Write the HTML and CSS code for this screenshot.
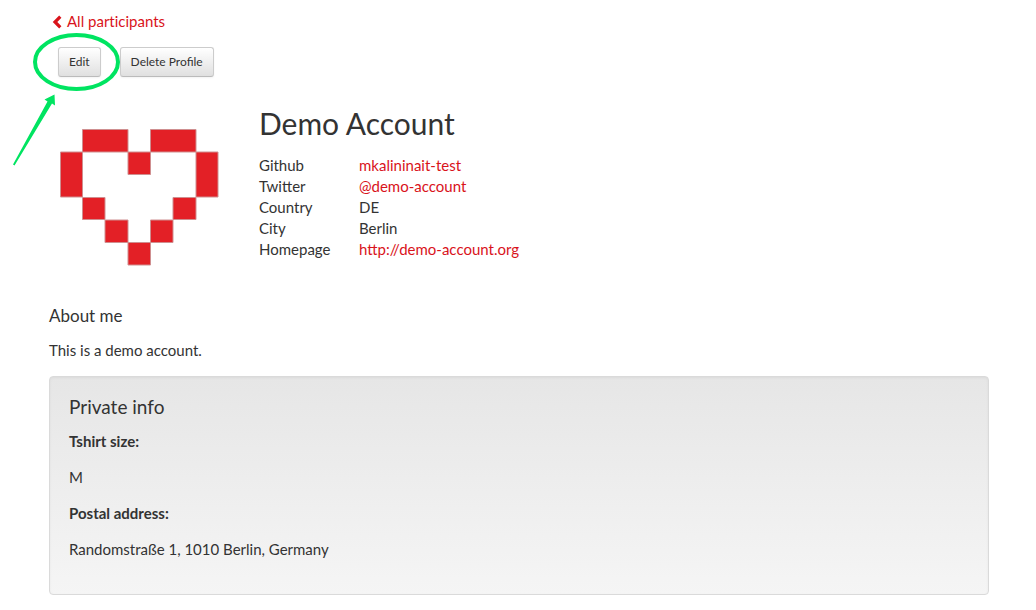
FILE: index.html
```html
<!DOCTYPE html>
<html lang="en">
<head>
<meta charset="utf-8">
<meta name="viewport" content="width=device-width, initial-scale=1">
<title>Demo Account</title>
<link rel="stylesheet" href="styles.css">
</head>
<body>
<main class="container">
  <nav class="actions">
    <a class="back" href="#"><svg class="chevron" viewBox="0 0 10 14" aria-hidden="true"><path d="M8.300 1.700 3 7l5.300 5.300" fill="none" stroke="currentColor" stroke-width="3.200"/></svg>All participants</a>
    <div class="buttons">
      <button class="btn" type="button">Edit</button>
      <button class="btn" type="button">Delete Profile</button>
    </div>
  </nav>

  <section class="profile">
    <svg class="avatar" viewBox="0 0 159 137" role="img" aria-label="Pixel heart">
      <g fill="#e32026" stroke="#cf8f90" stroke-width="1">
        <path d="M22.500 .5h45.500v22.500h-45.500zM90.500 .5h45.500v22.500h-45.500zM.5 23h22v45h-22zM136 23h22v45h-22zM68 23h22.500v22.500h-22.500zM22.500 68.500h22.500v22h-22.500zM113 68.500h23v22h-23zM45 91h23v22.500h-23zM90.500 91h22.500v22.500h-22.500zM68 113.500h22.500v22.500h-22.500z"/>
      </g>
    </svg>
    <div>
      <h1 class="name">Demo Account</h1>
      <dl class="details">
        <dt>Github</dt><dd><a href="#">mkalininait-test</a></dd>
        <dt>Twitter</dt><dd><a href="#">@demo-account</a></dd>
        <dt>Country</dt><dd>DE</dd>
        <dt>City</dt><dd>Berlin</dd>
        <dt>Homepage</dt><dd><a href="#">http://demo-account.org</a></dd>
      </dl>
    </div>
  </section>

  <section class="about">
    <h2 class="about-title">About me</h2>
    <p>This is a demo account.</p>
  </section>

  <section class="well">
    <h2 class="well-title">Private info</h2>
    <p><strong>Tshirt size:</strong></p>
    <p>M</p>
    <p><strong>Postal address:</strong></p>
    <p>Randomstraße 1, 1010 Berlin, Germany</p>
  </section>
</main>

<svg class="annotation" width="130" height="180" viewBox="0 0 130 180" aria-hidden="true">
  <ellipse cx="76.500" cy="62" rx="41.500" ry="27" fill="none" stroke="#00e461" stroke-width="4"/>
  <path d="M13 164.500 47.500 101.500 44.500 99.500 54.500 94.500 55 105.500 52 103.500 14.500 165.500z" fill="#00e461"/>
</svg>
</body>
</html>
```
FILE: styles.css
```css
body {
  margin: 0;
  background: #fff;
  color: #333;
  font-family: Lato, "Liberation Sans", sans-serif;
  font-size: 15px;
  line-height: 21px;
}

a {
  color: #d9131b;
  text-decoration: none;
}

p {
  margin: 0 0 15px;
}

.container {
  max-width: 940px;
  margin: 0 auto;
  padding: 11px 47px 15px 49px;
}

.back {
  display: inline-flex;
  align-items: center;
  gap: 5px;
  margin-left: 3px;
  font-variant-ligatures: none;
}

.chevron {
  width: 10px;
  height: 14px;
}

.buttons {
  display: flex;
  gap: 19px;
  margin: 13px 0 0 9px;
}

.btn {
  height: 30px;
  padding: 0 10px;
  border: 1px solid #ccc;
  border-bottom-color: #bbb;
  border-radius: 3px;
  background: linear-gradient(#fff, #e0e0e0);
  box-shadow: 0 1px 2px rgba(0, 0, 0, 0.05);
  color: #333;
  font: 12px/20px Lato, "Liberation Sans", sans-serif;
}

.profile {
  display: flex;
  gap: 40px;
  margin-top: 27px;
}

.avatar {
  flex: none;
  width: 159px;
  height: 137px;
  margin: 25px 0 0 11px;
}

.name {
  margin: 0 0 13px;
  font-size: 30px;
  font-weight: 400;
  line-height: 38px;
}

.details {
  display: grid;
  grid-template-columns: 100px 1fr;
  margin: 0;
}

.details dd {
  margin: 0;
}

.about {
  margin-top: 39px;
}

.about-title,
.well-title {
  margin: 0 0 14px;
  font-size: 17px;
  font-weight: 400;
  line-height: 21px;
}

.well {
  padding: 19px;
  border: 1px solid #dadada;
  border-radius: 4px;
  background: linear-gradient(#e6e6e6, #f5f5f5);
  box-shadow: inset 0 1px 3px rgba(0, 0, 0, 0.05);
}

.well-title {
  font-size: 19px;
}

.annotation {
  position: absolute;
  top: 0;
  left: 0;
  pointer-events: none;
}
```
